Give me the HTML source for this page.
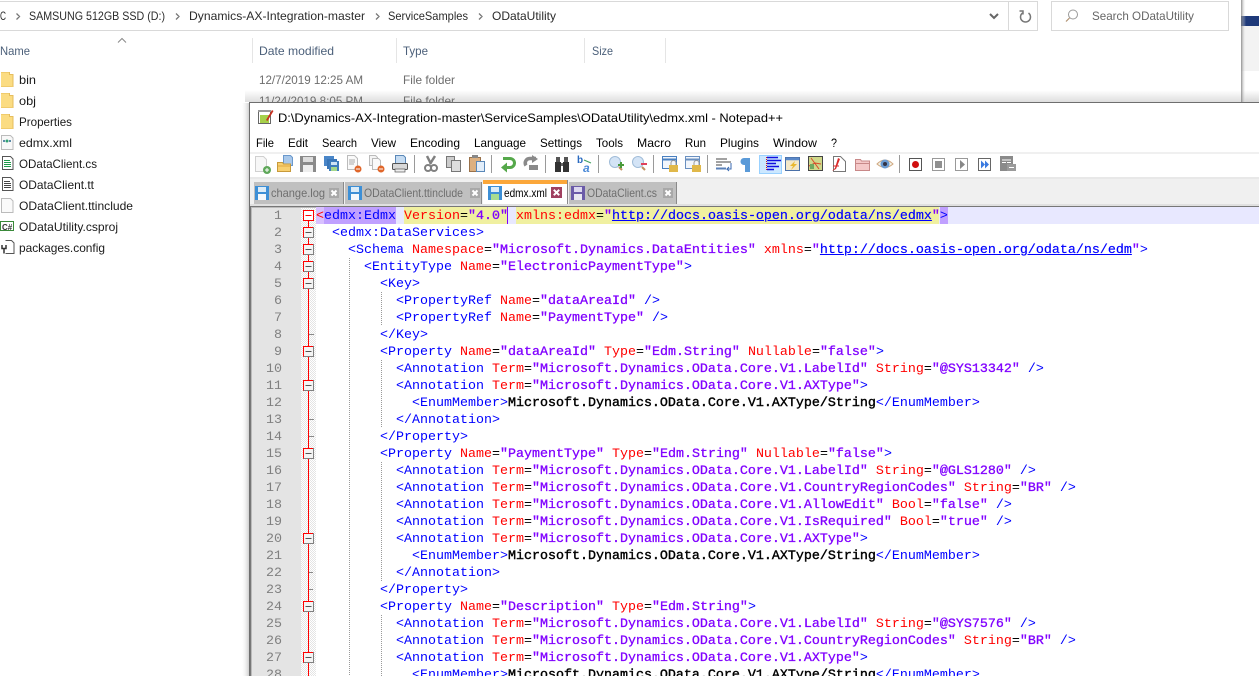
<!DOCTYPE html>
<html><head><meta charset="utf-8"><title>edmx.xml - Notepad++</title>
<style>
html,body{margin:0;padding:0;background:#fff;width:1259px;height:676px;overflow:hidden}
body{position:relative}
svg{position:absolute;left:0;top:0}
#ed{position:absolute;left:0;top:208px;width:1259px;height:468px;overflow:hidden;font:13.33px/17px "Liberation Mono",monospace;color:#00f;white-space:pre}
#ed div{position:absolute;left:316px;height:17px;width:943px}
#ed s{text-decoration:none;color:#f00}
#ed b{color:#8000ff;font-weight:normal;-webkit-text-stroke:.3px #8000ff}
#ed u{color:#00f;font-weight:normal;text-decoration:underline;-webkit-text-stroke:.2px #00f}
#ed em{font-style:normal;color:#000}
#ed strong{color:#000;font-weight:normal;-webkit-text-stroke:.4px #000}
</style></head><body>
<svg width="1259" height="676" viewBox="0 0 1259 676" font-family="Liberation Sans, sans-serif" font-size="12">
<defs>
<linearGradient id="sb" x1="0" y1="0" x2="0" y2="1"><stop offset="0" stop-color="#fff"/><stop offset="1" stop-color="#d8d8d8"/></linearGradient>
<linearGradient id="sr" x1="0" y1="0" x2="1" y2="0"><stop offset="0" stop-color="#fff" stop-opacity="0"/><stop offset="1" stop-color="#bbb"/></linearGradient>
<linearGradient id="sr2" x1="0" y1="0" x2="1" y2="0"><stop offset="0" stop-color="#777"/><stop offset="1" stop-color="#fff" stop-opacity="0"/></linearGradient>
<pattern id="chk" width="2" height="2" patternUnits="userSpaceOnUse"><rect width="2" height="2" fill="#fff"/><rect width="1" height="1" fill="#e4e4e4"/><rect x="1" y="1" width="1" height="1" fill="#e4e4e4"/></pattern>
<g id="folder"><path d="M1 2h8v2.500h4V17H1z" fill="#fbdc82"/><path d="M9.500 2v2.500h3.500V17" fill="none" stroke="#e6bd5c"/><path d="M1 2.500h8M1 16.500h12" stroke="#f0cb6c"/></g>
<g id="save"><rect x="0" y="0" width="14" height="14" fill="#3d8fd6"/><rect x="3" y="1" width="8" height="5" fill="#dcecf8"/><rect x="3" y="8" width="8" height="6" fill="#f4f8fc"/></g>
<g id="close"><rect width="10" height="10" fill="#a8a8a8"/><path d="M2.500 2.500l5 5M7.500 2.500l-5 5" stroke="#fff" stroke-width="2"/></g>
</defs>

<!-- right behind window -->
<rect x="1241" y="0" width="18" height="102" fill="#fff"/>
<rect x="1241" y="16" width="18" height="10" fill="#1f3a7a"/>
<rect x="1241" y="26" width="18" height="45" fill="#f3f3f3"/>
<rect x="1241" y="90" width="18" height="12" fill="url(#sb)"/>
<rect x="1241" y="0" width="5" height="102" fill="url(#sr2)" opacity=".8"/>
<rect x="245" y="90" width="996" height="12" fill="url(#sb)" opacity=".85"/>

<!-- address bar -->
<path d="M-1 1.500H1037.500V30.500H-1" fill="#fff" stroke="#d9d9d9"/>
<path d="M1008.500 1v29" stroke="#d9d9d9"/>
<g fill="#2b2b2b" font-size="12">
<text x="0" y="20" textLength="6" lengthAdjust="spacingAndGlyphs">C</text>
<text x="29" y="20" textLength="136" lengthAdjust="spacingAndGlyphs">SAMSUNG 512GB SSD (D:)</text>
<text x="189" y="20" textLength="176" lengthAdjust="spacingAndGlyphs">Dynamics-AX-Integration-master</text>
<text x="388" y="20" textLength="80" lengthAdjust="spacingAndGlyphs">ServiceSamples</text>
<text x="492" y="20" textLength="64" lengthAdjust="spacingAndGlyphs">ODataUtility</text>
</g>
<g fill="none" stroke="#777" stroke-width="1.300"><path d="M16.500 13.500l3 3-3 3M176 13.500l3 3-3 3M376 13.500l3 3-3 3M479 13.500l3 3-3 3"/></g>
<path d="M990 14l4 4 4-4" fill="none" stroke="#666" stroke-width="2"/>
<path d="M1028.500 13a5 5 0 1 1-6 0M1019.500 11h3.500v3.500" fill="none" stroke="#777" stroke-width="1.500"/>
<rect x="1051.500" y="1.500" width="177" height="29" fill="#fff" stroke="#d9d9d9"/>
<circle cx="1073" cy="14.500" r="4.500" fill="none" stroke="#999"/><path d="M1069.500 18l-3.500 3.500" stroke="#b09070" stroke-width="1.200"/>
<text x="1092" y="20" fill="#666" textLength="102" lengthAdjust="spacingAndGlyphs">Search ODataUtility</text>

<!-- headers -->
<path d="M118 42.500l4-4 4 4" fill="none" stroke="#888"/>
<g fill="#4c607a">
<text x="0" y="55" textLength="30" lengthAdjust="spacingAndGlyphs">Name</text>
<text x="259" y="55" textLength="75" lengthAdjust="spacingAndGlyphs">Date modified</text>
<text x="403" y="55" textLength="25" lengthAdjust="spacingAndGlyphs">Type</text>
<text x="592" y="55" textLength="21" lengthAdjust="spacingAndGlyphs">Size</text>
</g>
<path d="M252.500 38v25M396.500 38v25M584.500 38v25M665.500 38v25" stroke="#e5e5e5"/>

<!-- file list -->
<use href="#folder" x="0" y="70"/><use href="#folder" x="0" y="91"/><use href="#folder" x="0" y="112"/>
<g fill="#1a1a1a">
<text x="19" y="84" textLength="17" lengthAdjust="spacingAndGlyphs">bin</text>
<text x="19" y="105" textLength="17" lengthAdjust="spacingAndGlyphs">obj</text>
<text x="19" y="126" textLength="53" lengthAdjust="spacingAndGlyphs">Properties</text>
<text x="19" y="147" textLength="53" lengthAdjust="spacingAndGlyphs">edmx.xml</text>
<text x="19" y="168" textLength="78" lengthAdjust="spacingAndGlyphs">ODataClient.cs</text>
<text x="19" y="189" textLength="75" lengthAdjust="spacingAndGlyphs">ODataClient.tt</text>
<text x="19" y="210" textLength="114" lengthAdjust="spacingAndGlyphs">ODataClient.ttinclude</text>
<text x="19" y="231" textLength="99" lengthAdjust="spacingAndGlyphs">ODataUtility.csproj</text>
<text x="19" y="252" textLength="86" lengthAdjust="spacingAndGlyphs">packages.config</text>
</g>
<g fill="#6d6d6d">
<text x="259" y="84" textLength="104" lengthAdjust="spacingAndGlyphs">12/7/2019 12:25 AM</text>
<text x="403" y="84" textLength="52" lengthAdjust="spacingAndGlyphs">File folder</text>
<text x="259" y="105" textLength="104" lengthAdjust="spacingAndGlyphs">11/24/2019 8:05 PM</text>
<text x="403" y="105" textLength="52" lengthAdjust="spacingAndGlyphs">File folder</text>
</g>
<!-- file icons -->
<path d="M1.500 135.500h9l2.500 2.500v11.500H1.500z" fill="#f8f8f8" stroke="#bbb"/><path d="M3 141h9" stroke="#5a8aa8" stroke-width="2" stroke-dasharray="2 1"/><circle cx="7" cy="141" r="1.500" fill="#30a070"/>
<path d="M2.500 156.500h8l2.500 2.500v10.500H2.500z" fill="#fff" stroke="#555"/><path d="M4 160.500h6M4 162.500h7M4 164.500h7M4 166.500h7" stroke="#1f9a4a"/>
<path d="M2.500 177.500h8l2.500 2.500v10.500H2.500z" fill="#fff" stroke="#555"/><path d="M4 181.500h6M4 183.500h7M4 185.500h7M4 187.500h7" stroke="#444"/>
<path d="M1.500 198.500h9l2.500 2.500v11.500H1.500z" fill="#fafafa" stroke="#bbb"/>
<rect x="0.500" y="221.500" width="13" height="9" fill="#fff" stroke="#3a8a3a"/><text x="2" y="230" font-size="8" font-weight="bold" fill="#333">C#</text>
<path d="M5.500 240.500h6l2.500 2.500v10.500H5.500" fill="#fff" stroke="#555"/><path d="M2 245v3.500h4V245M4 248.500v5" fill="none" stroke="#333" stroke-width="1.500"/>

<!-- window shadow -->
<rect x="241" y="103" width="8" height="573" fill="url(#sr)" opacity=".7"/>
<!-- notepad window -->
<rect x="249" y="102" width="1010" height="574" fill="#fff"/>
<path d="M249.500 676V102.500H1259" fill="none" stroke="#6e6e6e"/>
<!-- app icon -->
<path d="M258.500 110.500h12v13h-12z" fill="#fff" stroke="#666"/><path d="M258 110h13v2h-13z" fill="#999"/><path d="M260 115h9v8h-9z" fill="#a6d04a"/><path d="M266 120l6-10 1.500 1-6 10z" fill="#c83020"/>
<text x="278" y="122" fill="#000" textLength="505" lengthAdjust="spacingAndGlyphs">D:\Dynamics-AX-Integration-master\ServiceSamples\ODataUtility\edmx.xml - Notepad++</text>
<!-- menu -->
<g fill="#000">
<text x="256" y="147" textLength="18" lengthAdjust="spacingAndGlyphs">File</text>
<text x="288" y="147" textLength="20" lengthAdjust="spacingAndGlyphs">Edit</text>
<text x="322" y="147" textLength="35" lengthAdjust="spacingAndGlyphs">Search</text>
<text x="371" y="147" textLength="25" lengthAdjust="spacingAndGlyphs">View</text>
<text x="410" y="147" textLength="50" lengthAdjust="spacingAndGlyphs">Encoding</text>
<text x="474" y="147" textLength="52" lengthAdjust="spacingAndGlyphs">Language</text>
<text x="540" y="147" textLength="42" lengthAdjust="spacingAndGlyphs">Settings</text>
<text x="596" y="147" textLength="27" lengthAdjust="spacingAndGlyphs">Tools</text>
<text x="637" y="147" textLength="34" lengthAdjust="spacingAndGlyphs">Macro</text>
<text x="685" y="147" textLength="21" lengthAdjust="spacingAndGlyphs">Run</text>
<text x="720" y="147" textLength="39" lengthAdjust="spacingAndGlyphs">Plugins</text>
<text x="773" y="147" textLength="44" lengthAdjust="spacingAndGlyphs">Window</text>
<text x="831" y="147" textLength="6" lengthAdjust="spacingAndGlyphs">?</text>
</g>
<!-- toolbar/tabbar bg -->
<rect x="250" y="152" width="1009" height="2" fill="#f0f0f0"/>
<rect x="250" y="177" width="1009" height="2" fill="#e8e8e8"/>
<rect x="250" y="179" width="1009" height="25" fill="#f0f0f0"/>
<rect x="250" y="204" width="1009" height="3" fill="#e0e0e0"/>
<!-- separators -->
<path d="M414.500 155v18M491.500 155v18M545.500 155v18M598.500 155v18M653.500 155v18M707.500 155v18M899.500 155v18" stroke="#9a9a9a"/>
<!-- toolbar icons -->
<path d="M255.500 156.500h8l3 3v12h-11z" fill="#f7f7f7" stroke="#d0d0d0"/><circle cx="267" cy="170" r="4" fill="#5fa85a"/><path d="M265 170h4M267 168v4" stroke="#fff"/>
<path d="M283.500 155.500h7l2 2v8h-9z" fill="#a9c8ea" stroke="#6a98cc"/><path d="M277.500 162.500h5l1 1.500h7v7.500h-13z" fill="#f8d070" stroke="#c89a3a"/><path d="M278 166h12" stroke="#e0a840"/>
<rect x="300" y="156" width="16" height="16" fill="#8a8a8a"/><rect x="303" y="157" width="10" height="5" fill="#ddd"/><rect x="303" y="165" width="10" height="7" fill="#eee"/>
<rect x="324" y="156" width="10" height="10" fill="#4a86c8"/><rect x="327" y="159" width="10" height="10" fill="#3a76b8"/><rect x="329" y="161" width="10" height="10" fill="#3f7dbd"/><rect x="331" y="162" width="6" height="3" fill="#cfe3f5"/><rect x="331" y="167" width="6" height="4" fill="#a4d88a"/>
<path d="M347.500 155.500h7l3 3v11h-10z" fill="#fafafa" stroke="#bbb"/><path d="M349 160h6M349 162h6M349 164h5" stroke="#aaa"/><circle cx="358" cy="169" r="3.500" fill="#e0662a"/><path d="M356 169h4" stroke="#fff"/>
<path d="M369.500 155.500h6l2 2v8h-8z" fill="#f4f4f4" stroke="#bbb"/><path d="M372.500 158.500h6l2 2v9h-8z" fill="#fafafa" stroke="#bbb"/><circle cx="381" cy="169" r="3.500" fill="#e0662a"/><path d="M379 169h4" stroke="#fff"/>
<path d="M395.500 155.500h8l2 2v6h-10z" fill="#c6dcf2" stroke="#5a88b8"/><rect x="392.500" y="163.500" width="15" height="6" rx="1" fill="#d8d8d8" stroke="#555"/><rect x="395" y="169" width="10" height="3" fill="#eee" stroke="#555" stroke-width=".7"/>
<path d="M435 156l-5 8M427 156l4 8" stroke="#808080" stroke-width="2.500"/><circle cx="428" cy="168" r="3" fill="none" stroke="#808080" stroke-width="2"/><circle cx="434" cy="168" r="3" fill="none" stroke="#808080" stroke-width="2"/>
<rect x="446.500" y="156.500" width="8" height="11" fill="#ccc" stroke="#777"/><rect x="451.500" y="160.500" width="9" height="11" fill="#ddd" stroke="#777"/>
<rect x="469.500" y="157.500" width="11" height="14" fill="#dcb080" stroke="#99714a"/><rect x="472" y="155" width="6" height="3" fill="#888"/><rect x="476.500" y="161.500" width="8" height="10" fill="#e2eefa" stroke="#5a88b8"/>
<path d="M503 158.500h7a4.500 4.500 0 0 1 0 9h-5" fill="none" stroke="#55a84a" stroke-width="3"/><path d="M507 162.500l-6 5 6 5z" fill="#55a84a"/>
<path d="M536 158.500h-6a4.500 4.500 0 0 0-4 7" fill="none" stroke="#8a8a8a" stroke-width="3.500"/><path d="M532 155l6 4-6 4z" fill="#8a8a8a"/><rect x="529" y="165" width="9" height="5" fill="#8a8a8a"/>
<rect x="555" y="162" width="6" height="10" fill="#333"/><rect x="563" y="162" width="6" height="10" fill="#333"/><rect x="556" y="157" width="4" height="5" fill="#555"/><rect x="564" y="157" width="4" height="5" fill="#555"/><rect x="561" y="163" width="2" height="3" fill="#666"/>
<text x="577" y="163" font-size="10" font-weight="bold" fill="#2a6ac0">b</text><text x="583" y="172" font-size="12" font-weight="bold" font-style="italic" fill="#4a8ad8">a</text><path d="M584 160l7 3" stroke="#40a060"/>
<circle cx="615" cy="162" r="5.500" fill="#d4e4f6" stroke="#a0bcd8"/><path d="M619 167l3 3" stroke="#c09060" stroke-width="2"/><path d="M618 165h6M621 162v6" stroke="#4a9a3a" stroke-width="2"/>
<circle cx="638" cy="162" r="5.500" fill="#d4e4f6" stroke="#a0bcd8"/><path d="M642 167l3 3" stroke="#c09060" stroke-width="2"/><path d="M641 164h6" stroke="#e0405a" stroke-width="2"/>
<rect x="662.500" y="156.500" width="14" height="12" fill="#f2f6fc" stroke="#4a80c0"/><path d="M663 159.500h13" stroke="#4a80c0" stroke-width="2"/><rect x="669" y="165" width="9" height="7" fill="#e0b84a"/><path d="M671 165v-2a2.500 2.500 0 0 1 5 0v2" fill="none" stroke="#999"/>
<rect x="685.500" y="156.500" width="14" height="12" fill="#f2f6fc" stroke="#6a90c0"/><path d="M686 159.500h13" stroke="#6a90c0" stroke-width="2"/><rect x="692" y="165" width="9" height="7" fill="#e0b84a"/><path d="M694 165v-2a2.500 2.500 0 0 1 5 0v2" fill="none" stroke="#999"/>
<path d="M716 159h11M716 162h15M716 165h6" stroke="#444"/><path d="M716 168.500h10" stroke="#5a80b8" stroke-width="2"/><path d="M731 163v6h-4l2-2m-2 2l2 2" fill="none" stroke="#3a6ab0"/>
<rect x="747" y="158" width="3" height="14" fill="#5a9ad8"/><path d="M747 158h-3a3.500 3.500 0 0 0 0 7h1v7h2z" fill="#5a9ad8"/>
<rect x="759.500" y="155.500" width="22" height="18" fill="#cce8ff" stroke="#99d1ff"/>
<path d="M767 157.500h11M767 160.500h14M767 163.500h9M767 166.500h12M767 169.500h7" stroke="#1010e0" stroke-width="1.500"/><path d="M766.500 157v14" stroke="#d02020" stroke-dasharray="1 1"/>
<rect x="785.500" y="157.500" width="14" height="13" fill="#f4e8c8" stroke="#4a70a8"/><path d="M786 159h13" stroke="#5a88c8" stroke-width="2.500"/><path d="M795 161l-5 5h3l-2 4 6-6h-3z" fill="#e8b830"/>
<rect x="808.500" y="156.500" width="14" height="14" fill="#cfd88a" stroke="#444"/><path d="M811 158l8 11M809 166l6-3 6 1" stroke="#d84a2a" fill="none"/><rect x="810" y="164" width="4" height="5" fill="#70a860"/>
<path d="M833.500 156.500h7l5 5v10h-12z" fill="#fff" stroke="#777"/><path d="M832 171l3-3 3-10 2 1-4 10" fill="#d82a2a"/><path d="M833 166h6" stroke="#d82a2a"/>
<path d="M855.500 159.500h5l1 1.500h8v9.500h-14z" fill="#f5c8c8" stroke="#c88888"/><path d="M856 163.500h13" stroke="#c88888"/>
<path d="M877 164q8-8 16 0q-8 7-16 0z" fill="#f2f2e8" stroke="#d0a880"/><circle cx="885" cy="164" r="4.500" fill="#6a9ad0"/><circle cx="885" cy="164" r="2" fill="#334"/>
<rect x="909.500" y="158.500" width="12" height="12" fill="#fff" stroke="#555"/><circle cx="915.500" cy="164.500" r="3.500" fill="#d01010"/>
<rect x="932.500" y="158.500" width="12" height="12" fill="#fff" stroke="#999"/><rect x="935" y="161" width="7" height="7" fill="#909090"/>
<rect x="955.500" y="158.500" width="12" height="12" fill="#fff" stroke="#999"/><path d="M960 160l5 4.500-5 4.500z" fill="#888"/>
<rect x="978.500" y="158.500" width="12" height="12" fill="#fff" stroke="#666"/><path d="M981 160.500l4 4-4 4zM985 160.500l4 4-4 4z" fill="#3a7ae0"/>
<rect x="1000" y="156" width="13" height="15" fill="#8a8a8a"/><rect x="1007" y="164" width="9" height="7" fill="#9a9a9a"/><path d="M1002 160h9M1002 162.500h4M1007 162.500h4M1009 167.500h5" stroke="#fff"/>

<!-- tabs -->
<rect x="254" y="182" width="89" height="22" fill="#c0c0c0"/><path d="M343.500 182v22" stroke="#8a8a8a"/>
<rect x="345" y="182" width="136" height="22" fill="#c0c0c0"/><path d="M481.500 182v22" stroke="#8a8a8a"/>
<rect x="483" y="183" width="85" height="21" fill="#fff"/><rect x="483" y="180" width="85" height="4" fill="#fba73a"/><path d="M567.500 180v24" stroke="#8a8a8a"/>
<rect x="569" y="182" width="107" height="22" fill="#c0c0c0"/><path d="M676.500 182v22" stroke="#8a8a8a"/>
<use href="#save" x="255" y="186"/><use href="#save" x="348" y="186"/>
<g><rect x="488" y="186" width="14" height="14" fill="#3d8fd6"/><rect x="491" y="187" width="8" height="5" fill="#dcecf8"/><rect x="491" y="194" width="8" height="6" fill="#a8dc90"/></g>
<g><rect x="571" y="186" width="14" height="14" fill="#6a5aa8"/><rect x="574" y="187" width="8" height="5" fill="#dcd8f0"/><rect x="574" y="194" width="8" height="6" fill="#e8e8f0"/></g>
<g fill="#6e6e6e">
<text x="271" y="197" textLength="54" lengthAdjust="spacingAndGlyphs">change.log</text>
<text x="364" y="197" textLength="99" lengthAdjust="spacingAndGlyphs">ODataClient.ttinclude</text>
<text x="587" y="197" textLength="70" lengthAdjust="spacingAndGlyphs">ODataClient.cs</text>
</g>
<text x="504" y="197" fill="#000" textLength="43" lengthAdjust="spacingAndGlyphs">edmx.xml</text>
<use href="#close" x="329" y="188"/><use href="#close" x="470" y="188"/><use href="#close" x="663" y="188"/>
<g transform="translate(551,187)"><rect width="11" height="11" fill="#a04060"/><path d="M2.800 2.800l5.400 5.400M8.200 2.800l-5.400 5.400" stroke="#fff" stroke-width="2"/></g>

<!-- editor frame -->
<rect x="250" y="207" width="1009" height="469" fill="#fff"/>
<path d="M250.500 676V206.500H1259" fill="none" stroke="#777"/>
<path d="M251.500 676V207.500H1259" fill="none" stroke="#bbb"/>
<rect x="252" y="208" width="49" height="468" fill="#e4e4e4"/>
<rect x="301" y="208" width="15" height="468" fill="url(#chk)"/>
<!-- current line -->
<rect x="316" y="207" width="943" height="17" fill="#e8e8ff"/>
<rect x="316" y="207" width="80" height="17" fill="#c0a0ff"/>
<rect x="316" y="207" width="8" height="17" fill="#d8c0ff"/>
<rect x="404" y="207" width="103" height="17" fill="#f0f0a0"/>
<rect x="516" y="207" width="423" height="17" fill="#f0f0a0"/>
<rect x="940" y="207" width="8" height="17" fill="#c0a0ff"/>
<rect x="507" y="207" width="1" height="17" fill="#8000ff"/>
<!-- indent guides -->
<path d="M349.500 258V676" stroke="#999" stroke-dasharray="1 1"/>
<path d="M381.500 292v34M381.500 360v68M381.500 462v119M381.500 615V676" stroke="#999" stroke-dasharray="1 1"/>
<!-- folding -->
<path d="M308.500 210V676" stroke="#f00"/>
<path d="M309 334.500h5M309 419.500h5M309 436.500h5M309 572.500h4M309 589.500h4" stroke="#888"/>
<g fill="#f4f4f4" stroke="#808080">
<rect x="303.500" y="227.500" width="10" height="10"/><rect x="303.500" y="244.500" width="10" height="10"/><rect x="303.500" y="261.500" width="10" height="10"/><rect x="303.500" y="278.500" width="10" height="10"/><rect x="303.500" y="346.500" width="10" height="10"/><rect x="303.500" y="380.500" width="10" height="10"/><rect x="303.500" y="448.500" width="10" height="10"/><rect x="303.500" y="533.500" width="10" height="10"/><rect x="303.500" y="601.500" width="10" height="10"/><rect x="303.500" y="652.500" width="10" height="10"/>
</g>
<path d="M313 227.500h-9.500v10M313 244.500h-9.500v10M313 261.500h-9.500v10M313 278.500h-9.500v10M313 346.500h-9.500v10M313 380.500h-9.500v10M313 448.500h-9.500v10M313 533.500h-9.500v10M313 601.500h-9.500v10M313 652.500h-9.500v10" fill="none" stroke="#f00"/>
<path d="M305.500 232.500h6M305.500 249.500h6M305.500 266.500h6M305.500 283.500h6M305.500 351.500h6M305.500 385.500h6M305.500 453.500h6M305.500 538.500h6M305.500 606.500h6M305.500 657.500h6" stroke="#555"/>
<rect x="303.500" y="210.500" width="10" height="10" fill="#fff" stroke="#f00"/><path d="M305.500 215.500h6" stroke="#f00"/>
<!-- line numbers -->
<g font-family="Liberation Mono, monospace" font-size="13.33" fill="#808080" text-anchor="end">
<text x="282" y="219">1</text><text x="282" y="236">2</text><text x="282" y="253">3</text><text x="282" y="270">4</text><text x="282" y="287">5</text><text x="282" y="304">6</text><text x="282" y="321">7</text><text x="282" y="338">8</text><text x="282" y="355">9</text><text x="282" y="372">10</text><text x="282" y="389">11</text><text x="282" y="406">12</text><text x="282" y="423">13</text><text x="282" y="440">14</text><text x="282" y="457">15</text><text x="282" y="474">16</text><text x="282" y="491">17</text><text x="282" y="508">18</text><text x="282" y="525">19</text><text x="282" y="542">20</text><text x="282" y="559">21</text><text x="282" y="576">22</text><text x="282" y="593">23</text><text x="282" y="610">24</text><text x="282" y="627">25</text><text x="282" y="644">26</text><text x="282" y="661">27</text><text x="282" y="678">28</text>
</g>
</svg>
<div id="ed">
<div style="top:0"><s>&lt;</s>edmx:Edmx <s>Version</s><em>=</em><b>"4.0"</b> <s>xmlns:edmx</s><em>=</em><b>"<u>http://docs.oasis-open.org/odata/ns/edmx</u>"</b>&gt;</div>
<div style="top:17px">  &lt;edmx:DataServices&gt;</div>
<div style="top:34px">    &lt;Schema <s>Namespace</s><em>=</em><b>"Microsoft.Dynamics.DataEntities"</b> <s>xmlns</s><em>=</em><b>"<u>http://docs.oasis-open.org/odata/ns/edm</u>"</b>&gt;</div>
<div style="top:51px">      &lt;EntityType <s>Name</s><em>=</em><b>"ElectronicPaymentType"</b>&gt;</div>
<div style="top:68px">        &lt;Key&gt;</div>
<div style="top:85px">          &lt;PropertyRef <s>Name</s><em>=</em><b>"dataAreaId"</b> /&gt;</div>
<div style="top:102px">          &lt;PropertyRef <s>Name</s><em>=</em><b>"PaymentType"</b> /&gt;</div>
<div style="top:119px">        &lt;/Key&gt;</div>
<div style="top:136px">        &lt;Property <s>Name</s><em>=</em><b>"dataAreaId"</b> <s>Type</s><em>=</em><b>"Edm.String"</b> <s>Nullable</s><em>=</em><b>"false"</b>&gt;</div>
<div style="top:153px">          &lt;Annotation <s>Term</s><em>=</em><b>"Microsoft.Dynamics.OData.Core.V1.LabelId"</b> <s>String</s><em>=</em><b>"@SYS13342"</b> /&gt;</div>
<div style="top:170px">          &lt;Annotation <s>Term</s><em>=</em><b>"Microsoft.Dynamics.OData.Core.V1.AXType"</b>&gt;</div>
<div style="top:187px">            &lt;EnumMember&gt;<strong>Microsoft.Dynamics.OData.Core.V1.AXType/String</strong>&lt;/EnumMember&gt;</div>
<div style="top:204px">          &lt;/Annotation&gt;</div>
<div style="top:221px">        &lt;/Property&gt;</div>
<div style="top:238px">        &lt;Property <s>Name</s><em>=</em><b>"PaymentType"</b> <s>Type</s><em>=</em><b>"Edm.String"</b> <s>Nullable</s><em>=</em><b>"false"</b>&gt;</div>
<div style="top:255px">          &lt;Annotation <s>Term</s><em>=</em><b>"Microsoft.Dynamics.OData.Core.V1.LabelId"</b> <s>String</s><em>=</em><b>"@GLS1280"</b> /&gt;</div>
<div style="top:272px">          &lt;Annotation <s>Term</s><em>=</em><b>"Microsoft.Dynamics.OData.Core.V1.CountryRegionCodes"</b> <s>String</s><em>=</em><b>"BR"</b> /&gt;</div>
<div style="top:289px">          &lt;Annotation <s>Term</s><em>=</em><b>"Microsoft.Dynamics.OData.Core.V1.AllowEdit"</b> <s>Bool</s><em>=</em><b>"false"</b> /&gt;</div>
<div style="top:306px">          &lt;Annotation <s>Term</s><em>=</em><b>"Microsoft.Dynamics.OData.Core.V1.IsRequired"</b> <s>Bool</s><em>=</em><b>"true"</b> /&gt;</div>
<div style="top:323px">          &lt;Annotation <s>Term</s><em>=</em><b>"Microsoft.Dynamics.OData.Core.V1.AXType"</b>&gt;</div>
<div style="top:340px">            &lt;EnumMember&gt;<strong>Microsoft.Dynamics.OData.Core.V1.AXType/String</strong>&lt;/EnumMember&gt;</div>
<div style="top:357px">          &lt;/Annotation&gt;</div>
<div style="top:374px">        &lt;/Property&gt;</div>
<div style="top:391px">        &lt;Property <s>Name</s><em>=</em><b>"Description"</b> <s>Type</s><em>=</em><b>"Edm.String"</b>&gt;</div>
<div style="top:408px">          &lt;Annotation <s>Term</s><em>=</em><b>"Microsoft.Dynamics.OData.Core.V1.LabelId"</b> <s>String</s><em>=</em><b>"@SYS7576"</b> /&gt;</div>
<div style="top:425px">          &lt;Annotation <s>Term</s><em>=</em><b>"Microsoft.Dynamics.OData.Core.V1.CountryRegionCodes"</b> <s>String</s><em>=</em><b>"BR"</b> /&gt;</div>
<div style="top:442px">          &lt;Annotation <s>Term</s><em>=</em><b>"Microsoft.Dynamics.OData.Core.V1.AXType"</b>&gt;</div>
<div style="top:459px">            &lt;EnumMember&gt;<strong>Microsoft.Dynamics.OData.Core.V1.AXType/String</strong>&lt;/EnumMember&gt;</div>
</div>
</body></html>
